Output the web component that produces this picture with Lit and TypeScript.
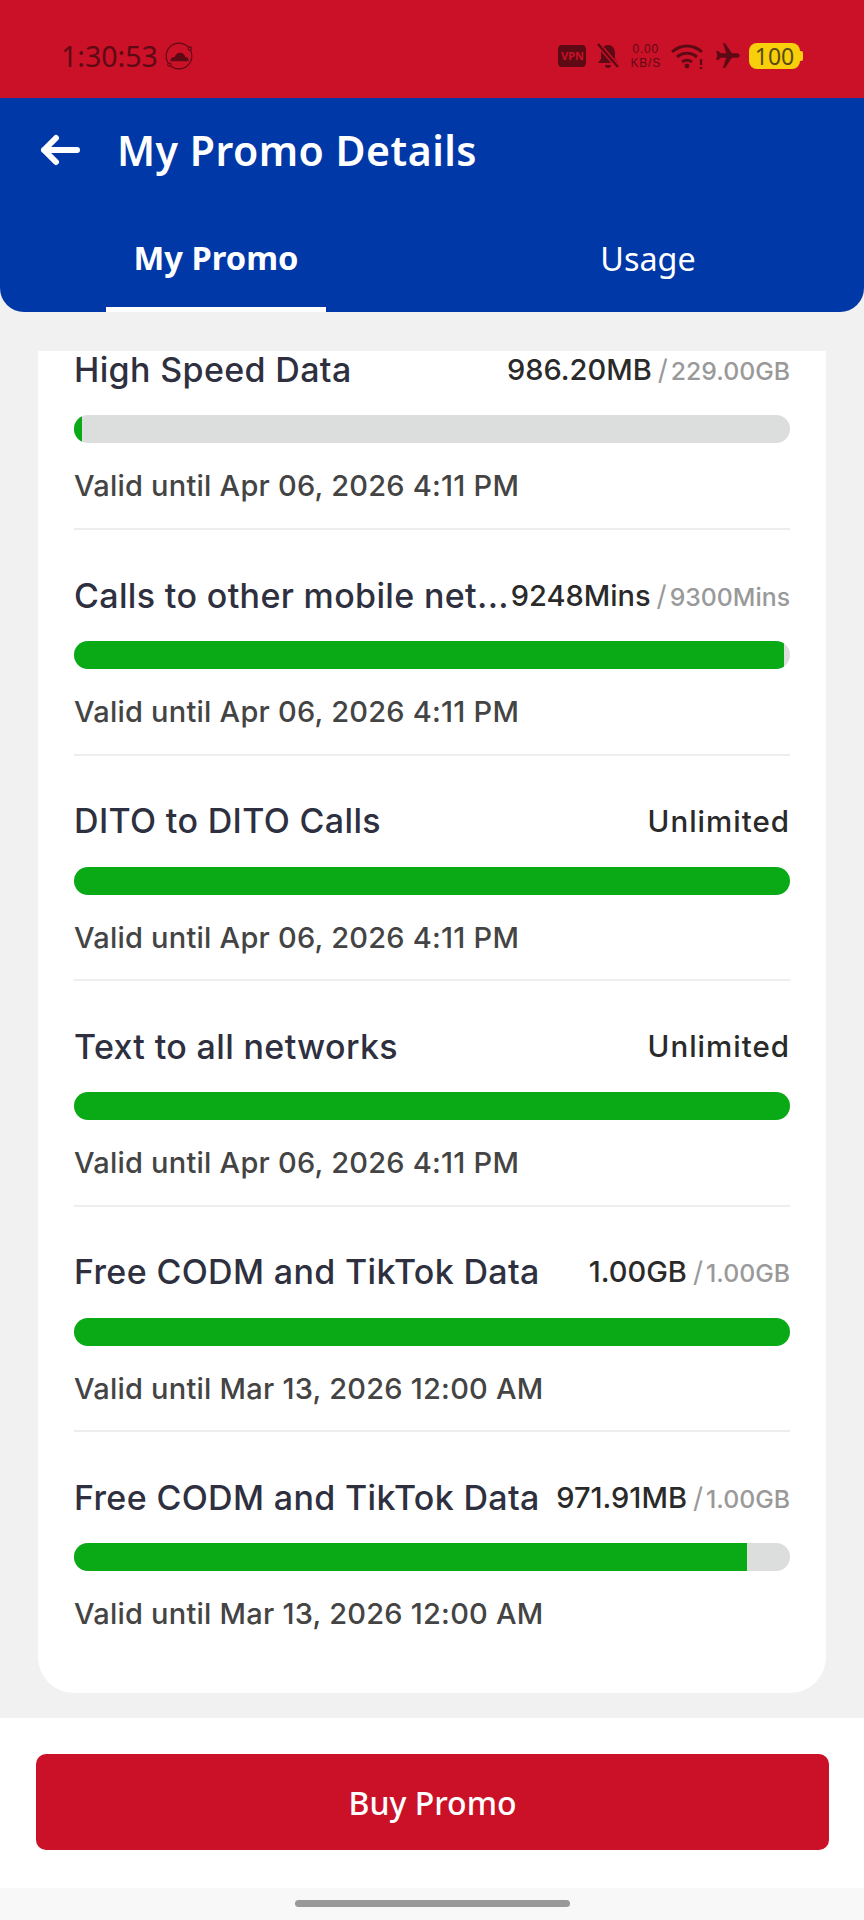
import { LitElement, html, css, svg } from "lit";
import { customElement } from "lit/decorators.js";

interface Promo {
  name: string;
  used?: string;
  total?: string;
  pct: number;
  valid: string;
}

const promos: Promo[] = [
  { name: "High Speed Data", used: "986.20MB", total: "229.00GB", pct: 1.1, valid: "Valid until Apr 06, 2026 4:11 PM" },
  { name: "Calls to other mobile net...", used: "9248Mins", total: "9300Mins", pct: 99.2, valid: "Valid until Apr 06, 2026 4:11 PM" },
  { name: "DITO to DITO Calls", pct: 100, valid: "Valid until Apr 06, 2026 4:11 PM" },
  { name: "Text to all networks", pct: 100, valid: "Valid until Apr 06, 2026 4:11 PM" },
  { name: "Free CODM and TikTok Data", used: "1.00GB", total: "1.00GB", pct: 100, valid: "Valid until Mar 13, 2026 12:00 AM" },
  { name: "Free CODM and TikTok Data", used: "971.91MB", total: "1.00GB", pct: 94, valid: "Valid until Mar 13, 2026 12:00 AM" },
];

const cloudIcon = svg`<svg class="ic" width="30" height="30" viewBox="0 0 28 28">
  <circle cx="14" cy="14" r="12" fill="none" stroke="#5e0a14" stroke-width="1.1" />
  <circle cx="24" cy="7" r="1.5" fill="#cb1128" stroke="#5e0a14" />
  <circle cx="5" cy="22" r="1.5" fill="#cb1128" stroke="#5e0a14" />
  <path d="M6 19c0-3 2-4 4-4 1-3 3-4 5-4 3 0 4 2 5 4 2 0 3 1 3 4z" fill="#5e0a14" />
</svg>`;

@customElement("app-root")
export class AppRoot extends LitElement {
  static styles = css`
    :host {
      display: block;
      width: 864px;
      height: 1920px;
      background: #f1f1f1;
      overflow: hidden;
      font-family: Inter, "Liberation Sans", sans-serif;
    }
    .page {
      display: flex;
      flex-direction: column;
      height: 1920px;
    }
    .status {
      height: 98px;
      flex: none;
      background: #cb1128;
      display: flex;
      align-items: center;
      justify-content: space-between;
      padding: 13px 64px 0 61px;
      box-sizing: border-box;
      color: #5e0a14;
    }
    .status-left {
      display: flex;
      align-items: center;
      gap: 6px;
      font: 400 28.5px "Noto Sans", sans-serif;
    }
    .status-right {
      display: flex;
      align-items: center;
      gap: 10px;
    }
    .ic {
      display: block;
    }
    .vpn {
      width: 28px;
      height: 22px;
      border-radius: 4px;
      background: #5e0a14;
      color: #cb1128;
      font: 700 11px/22px "Noto Sans", sans-serif;
      text-align: center;
    }
    .speed {
      font: 400 12px/14px "Liberation Sans", sans-serif;
      text-align: center;
      letter-spacing: 0.8px;
    }
    .battery {
      width: 51px;
      height: 26px;
      margin-left: -3px;
      border-radius: 8px;
      background: #f7cf0b;
      color: #5a4a10;
      font: 400 23px/26px "Noto Sans", sans-serif;
      text-align: center;
      position: relative;
    }
    .battery::after {
      content: "";
      position: absolute;
      right: -3px;
      top: 8px;
      width: 3px;
      height: 10px;
      border-radius: 0 2px 2px 0;
      background: #f7cf0b;
    }
    .header {
      height: 214px;
      flex: none;
      background: #0038a8;
      border-radius: 0 0 24px 24px;
      color: #fff;
      display: flex;
      flex-direction: column;
      box-sizing: border-box;
      font-family: "Noto Sans", sans-serif;
    }
    .bar {
      display: flex;
      align-items: center;
      gap: 37px;
      height: 104px;
      padding-left: 40px;
      box-sizing: border-box;
      flex: none;
    }
    .title {
      font-size: 41px;
      font-weight: 600;
      letter-spacing: 0.5px;
    }
    .tabs {
      display: grid;
      grid-template-columns: 432px 432px;
      flex: 1;
    }
    .tab {
      display: flex;
      align-items: center;
      justify-content: center;
      padding-top: 1px;
      font-size: 32.3px;
      position: relative;
    }
    .tab.on {
      font-size: 32.7px;
      font-weight: 700;
    }
    .tab.on::after {
      content: "";
      position: absolute;
      left: 106px;
      width: 220px;
      bottom: 0;
      height: 5px;
      background: #fff;
    }
    .content {
      flex: 1;
      padding: 39px 38px 25px;
      min-height: 0;
    }
    .card {
      background: #fff;
      border-radius: 0 0 36px 36px;
      height: 100%;
      padding: 0 36px;
      box-sizing: border-box;
    }
    .row {
      height: 225.6px;
      box-sizing: border-box;
      display: flex;
      flex-direction: column;
      border-bottom: 2px solid #eeeeee;
      padding-top: 47px;
    }
    .row:first-child {
      height: 179px;
      padding-top: 0;
    }
    .row:last-child {
      border-bottom: none;
    }
    .top {
      display: flex;
      align-items: center;
      justify-content: space-between;
      height: 36px;
      gap: 1px;
      margin-bottom: 28px;
    }
    .name {
      font-size: 34px;
      letter-spacing: 0.35px;
      font-weight: 500;
      color: #2e3040;
      white-space: nowrap;
    }
    .amount {
      flex: none;
      font-size: 29px;
      font-weight: 500;
      color: #2a2a2a;
    }
    .amount.unlimited {
      font-size: 29.5px;
      letter-spacing: 1px;
    }
    .slash {
      font-size: 28px;
      font-weight: 400;
      color: #999;
      margin: 0 3px 0 6px;
    }
    .total {
      font-size: 24.8px;
      font-weight: 500;
      color: #999;
    }
    .track {
      height: 28px;
      border-radius: 14px;
      background: #dcdedd;
      overflow: hidden;
      flex: none;
    }
    .fill {
      height: 100%;
      background: #0aa916;
    }
    .valid {
      margin-top: 28px;
      font-size: 29px;
      letter-spacing: 0.23px;
      line-height: 30px;
      font-weight: 500;
      color: #444;
    }
    .footer {
      flex: none;
      height: 170px;
      background: #fff;
      padding: 36px 35px 0 36px;
      box-sizing: border-box;
    }
    .buy {
      height: 96px;
      border-radius: 10px;
      background: #cb1128;
      color: #fff;
      display: flex;
      align-items: center;
      justify-content: center;
      font: 500 32px "Noto Sans", sans-serif;
    }
    .nav {
      flex: none;
      height: 32px;
      background: #f8f8f8;
      display: flex;
      justify-content: center;
      padding-top: 12px;
      box-sizing: border-box;
    }
    .handle {
      width: 275px;
      height: 7px;
      border-radius: 4px;
      background: #999;
    }
  `;

  renderAmount(p: Promo) {
    if (!p.used) return html`<div class="amount unlimited">Unlimited</div>`;
    return html`<div class="amount">
      ${p.used}<span class="slash">/</span><span class="total">${p.total}</span>
    </div>`;
  }

  renderRow(p: Promo) {
    return html`<div class="row">
      <div class="top">
        <div class="name">${p.name}</div>
        ${this.renderAmount(p)}
      </div>
      <div class="track">
        <div class="fill" style="width:${p.pct}%"></div>
      </div>
      <div class="valid">${p.valid}</div>
    </div>`;
  }

  render() {
    return html`<div class="page">
      <div class="status">
        <div class="status-left">1:30:53 ${cloudIcon}</div>
        <div class="status-right">
          <div class="vpn">VPN</div>
          <svg class="ic" width="24" height="28" viewBox="0 0 24 28">
            <path d="M12 3c-4 0-7 3-7 8v6l-3 4h20l-3-4v-6c0-5-3-8-7-8zM9 23h6c0 2-1 3-3 3s-3-1-3-3z" fill="#5e0a14" />
            <path d="M2 2l20 23" stroke="#cb1128" stroke-width="5" />
            <path d="M2 2l20 23" stroke="#5e0a14" stroke-width="2.4" />
          </svg>
          <div class="speed">0.00<br />KB/S</div>
          <svg class="ic" width="34" height="26" viewBox="0 0 34 26" fill="none" stroke="#5e0a14" stroke-width="3">
            <path d="M1 9c9-8 21-8 30 0M6 14c6-5 14-5 20 0M11 19c3-2 7-2 10 0" />
            <circle cx="16" cy="23" r="2.4" fill="#5e0a14" stroke="none" />
            <path d="M30 16v6M30 24v2" stroke-width="2.4" />
          </svg>
          <svg class="ic" width="27" height="27" viewBox="0 0 24 24" fill="#5e0a14">
            <path d="M22 12c0-1-1-2-2-2h-5L9 1H7l3 9H5L3 8H1l1 4-1 4h2l2-2h5l-3 9h2l6-9h5c1 0 2-1 2-2z" />
          </svg>
          <div class="battery">100</div>
        </div>
      </div>
      <div class="header">
        <div class="bar">
          <svg width="40" height="32" viewBox="0 0 40 32" fill="none" stroke="#fff" stroke-width="6" stroke-linecap="round" stroke-linejoin="round">
            <path d="M37 16H4M16 4L4 16l12 12" />
          </svg>
          <div class="title">My Promo Details</div>
        </div>
        <div class="tabs">
          <div class="tab on">My Promo</div>
          <div class="tab">Usage</div>
        </div>
      </div>
      <div class="content">
        <div class="card">${promos.map((p) => this.renderRow(p))}</div>
      </div>
      <div class="footer"><div class="buy">Buy Promo</div></div>
      <div class="nav"><div class="handle"></div></div>
    </div>`;
  }
}
